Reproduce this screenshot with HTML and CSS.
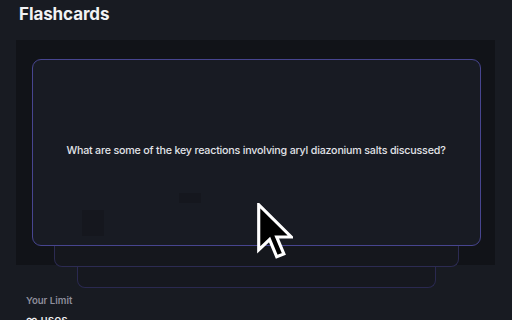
FILE: index.html
```html
<!DOCTYPE html>
<html>
<head>
<meta charset="utf-8">
<link rel="stylesheet" href="styles.css">
</head>
<body>
<div class="page">
  <h1 class="title">Flashcards</h1>
  <div class="stage">
    <div class="stack">
      <div class="card card-main">
        <p class="question">What are some of the key reactions involving aryl diazonium salts discussed?</p>
        <div class="ghost ghost-a"></div>
        <div class="ghost ghost-b"></div>
      </div>
      <div class="card card-2"></div>
      <div class="card card-3"></div>
    </div>
    <svg class="cursor" width="36" height="56" viewBox="0 0 12.6 19.6">
      <path d="M0.6 0.6 L0.6 16.4 L4.4 12.8 L6.9 18.8 L9.4 17.8 L6.9 11.9 L12 11.9 Z" fill="#000" stroke="#fff" stroke-width="1.1" stroke-linejoin="miter"/>
    </svg>
  </div>
  <div class="limit">
    <div class="limit-label">Your Limit</div>
    <div class="limit-value">∞ uses</div>
  </div>
</div>
</body>
</html>
```
FILE: styles.css
```css
* { box-sizing: border-box; }
html, body { margin: 0; padding: 0; }
body {
  background: #181b22;
  font-family: "Inter", "Noto Sans", sans-serif;
  color: #fff;
  width: 512px;
  height: 320px;
  overflow: hidden;
}
.page {
  padding: 4px 0 0 0;
  position: relative;
}
.title {
  margin: 0 0 0 19px;
  font-size: 17px;
  font-weight: 700;
  line-height: 21px;
  color: #f2f2f4;
  letter-spacing: -0.1px;
}
.stage {
  margin: 15px 17px 0 16px;
  height: 225px;
  background: #111318;
  padding: 19px 15px 0 16px;
  position: relative;
}
.stack {
  display: flex;
  flex-direction: column;
  align-items: center;
}
.card {
  border-radius: 9px;
  background: #181b23;
}
.card-main {
  width: 449px;
  height: 187px;
  border: 1.5px solid #47458f;
  display: flex;
  align-items: center;
  justify-content: center;
  position: relative;
  z-index: 3;
}
.card-2 {
  width: 405px;
  height: 30px;
  margin-top: -9px;
  border: 1px solid #2c2b52;
  border-top: none;
  border-radius: 0 0 8px 8px;
  background: #15171d;
  position: relative;
  z-index: 2;
}
.card-3 {
  width: 359px;
  height: 30px;
  margin-top: -9px;
  border: 1px solid #2a2950;
  border-top: none;
  border-radius: 0 0 8px 8px;
  background: #16181f;
  position: relative;
  z-index: 1;
}
.question {
  margin: 0;
  font-size: 10.7px;
  font-weight: 500;
  color: #e2e3e8;
  letter-spacing: -0.2px;
  position: relative;
  top: -2px;
}
.ghost {
  position: absolute;
  background: #15171e;
}
.ghost-a { left: 49px; top: 150px; width: 22px; height: 26px; }
.ghost-b { left: 146px; top: 133px; width: 22px; height: 10px; }
.cursor {
  position: absolute;
  left: 241px;
  top: 163px;
  z-index: 5;
}
.limit {
  margin: 29px 0 0 26px;
}
.limit-label {
  font-size: 9.6px;
  font-weight: 600;
  color: #8e8e9c;
  line-height: 13px;
}
.limit-value {
  margin-top: 6px;
  font-size: 12px;
  font-weight: 500;
  color: #f0f0f2;
  line-height: 14px;
}
```
